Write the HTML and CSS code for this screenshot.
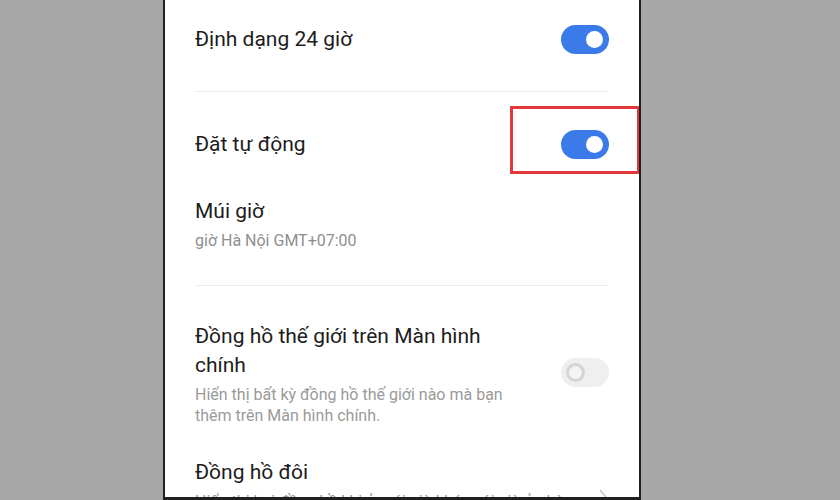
FILE: index.html
```html
<!DOCTYPE html>
<html lang="vi">
<head>
<meta charset="utf-8">
<title>Cài đặt ngày giờ</title>
<link rel="stylesheet" href="styles.css">
</head>
<body>
<div class="phone">
  <div class="row row-first">
    <div class="title">Định dạng 24 giờ</div>
    <span class="toggle on"><span class="knob"></span></span>
  </div>
  <div class="sep sep-1"></div>
  <div class="row row-auto">
    <div class="title">Đặt tự động</div>
    <span class="toggle on"><span class="knob"></span></span>
  </div>
  <div class="block row-tz">
    <div class="title">Múi giờ</div>
    <div class="sub">giờ Hà Nội GMT+07:00</div>
  </div>
  <div class="sep sep-2"></div>
  <div class="row row-world">
    <div class="text">
      <div class="title">Đồng hồ thế giới trên Màn hình chính</div>
      <div class="desc">Hiển thị bất kỳ đồng hồ thế giới nào mà bạn thêm trên Màn hình chính.</div>
    </div>
    <span class="toggle off"><span class="knob"></span></span>
  </div>
  <div class="row row-dual">
    <div class="text">
      <div class="title">Đồng hồ đôi</div>
      <div class="desc">Hiển thị hai đồng hồ khi ở múi giờ khác với giờ ở nhà.</div>
    </div>
    <svg class="chev" width="10" height="18" viewBox="0 0 10 18"><path d="M2 2 L8 9 L2 16" fill="none" stroke="#c4c4c4" stroke-width="1.4"/></svg>
  </div>
  <div class="highlight"></div>
</div>
</body>
</html>
```

FILE: styles.css
```css
html, body {
  margin: 0;
  padding: 0;
}
body {
  background: #a7a7a7;
  width: 840px;
  height: 500px;
  overflow: hidden;
  font-family: Roboto, "Noto Sans", "Liberation Sans", sans-serif;
}
.phone {
  position: relative;
  margin-left: 163px;
  width: 474px;
  height: 497px;
  background: #ffffff;
  border-left: 2px solid #1f1f1f;
  border-right: 2px solid #1f1f1f;
  border-bottom: 3px solid #1f1f1f;
  padding: 0 30px;
  box-sizing: content-box;
  box-sizing: border-box;
  width: 478px;
  height: 500px;
  overflow: hidden;
  display: flex;
  flex-direction: column;
}
.row {
  display: flex;
  align-items: center;
  justify-content: space-between;
  flex: none;
}
.title {
  font-size: 21px;
  line-height: 29px;
  color: #1c1c1c;
}
.sub {
  font-size: 16px;
  line-height: 20px;
  color: #8e8e8e;
  margin-top: 5px;
}
.desc {
  font-size: 16px;
  line-height: 21px;
  color: #9a9a9a;
  margin-top: 4px;
}
.text {
  width: 322px;
}
.row-first {
  height: 78px;
}
.sep {
  flex: none;
  height: 1px;
  background: #ececec;
  margin-right: 1px;
}
.sep-1 {
  margin-top: 13px;
}
.row-auto {
  height: 105px;
}
.row-tz {
  flex: none;
}
.sep-2 {
  margin-top: 34px;
}
.row-world {
  padding-top: 36px;
}
.row-world .toggle {
  margin-bottom: 4px;
}
.row-dual {
  padding-top: 32px;
  align-items: flex-start;
}
.row-dual .desc {
  white-space: nowrap;
}
.chev {
  margin-top: 30px;
  margin-right: 1px;
}
.toggle {
  position: relative;
  flex: none;
  width: 48px;
  height: 29px;
  border-radius: 15px;
  box-sizing: border-box;
}
.toggle.on {
  background: #3a7be9;
}
.toggle.off {
  background: #efefef;
}
.knob {
  position: absolute;
  top: 50%;
  border-radius: 50%;
  box-sizing: border-box;
}
.toggle.on .knob {
  width: 17px;
  height: 17px;
  right: 6px;
  margin-top: -8.5px;
  background: #ffffff;
}
.toggle.off .knob {
  width: 19px;
  height: 19px;
  left: 5px;
  margin-top: -9.5px;
  background: #f4f4f4;
  border: 3px solid #d4d4d4;
}
.highlight {
  position: absolute;
  left: 345px;
  top: 106px;
  width: 130px;
  height: 68px;
  border: 3px solid #e0393d;
  box-sizing: border-box;
}
```
